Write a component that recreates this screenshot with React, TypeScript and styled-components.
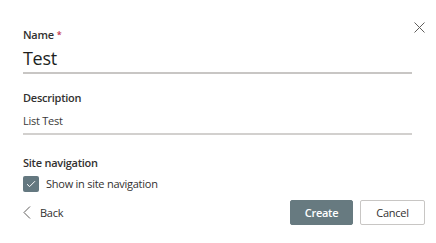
import React from 'react';
import styled, { createGlobalStyle } from 'styled-components';

const Global = createGlobalStyle`
  body {
    margin: 0;
    background: #ffffff;
    font-family: 'Open Sans', 'Noto Sans', sans-serif;
    color: #323130;
    letter-spacing: -0.25px;
  }
`;

const Dialog = styled.div`
  position: relative;
  width: 436px;
  height: 243px;
  box-sizing: border-box;
  padding: 27px 24px 0 23px;
  display: flex;
  flex-direction: column;
`;

const CloseButton = styled.button`
  position: absolute;
  top: 20px;
  right: 10px;
  width: 14px;
  height: 14px;
  padding: 0;
  border: none;
  background: none;
  display: flex;
  align-items: center;
  justify-content: center;
  color: #605e5c;
`;

const Field = styled.div<{ $gap: number }>`
  display: flex;
  flex-direction: column;
  margin-bottom: ${p => p.$gap}px;
`;

const Label = styled.div`
  font-size: 11px;
  font-weight: 600;
  line-height: 16px;
  color: #323130;
`;

const Required = styled.span`
  color: #c4314b;
  font-size: 9px;
  vertical-align: top;
  margin-left: 3px;
`;

const TextInput = styled.div<{ $big?: boolean }>`
  font-size: ${p => (p.$big ? '18px' : '11px')};
  font-weight: ${p => (p.$big ? 500 : 400)};
  letter-spacing: ${p => (p.$big ? '-0.3px' : '-0.25px')};
  line-height: ${p => (p.$big ? '26px' : '20px')};
  padding: ${p => (p.$big ? '2px 0 1px' : '5px 0 2px')};
  border-bottom: 2px solid ${p => (p.$big ? '#c8c6c4' : '#d2d0ce')};
  color: ${p => (p.$big ? '#201f1e' : '#3b3a39')};
  width: 389px;
`;

const CheckRow = styled.label`
  display: flex;
  align-items: center;
  gap: 7px;
  margin-top: 5px;
  font-size: 11px;
  line-height: 16px;
  color: #323130;
`;

const Box = styled.span`
  width: 16px;
  height: 16px;
  border-radius: 2px;
  background: #647880;
  display: flex;
  align-items: center;
  justify-content: center;
`;

const Footer = styled.div`
  display: flex;
  align-items: center;
  justify-content: space-between;
  margin-top: 8px;
  margin-right: -13px;
`;

const BackLink = styled.button`
  display: flex;
  align-items: center;
  gap: 9px;
  padding: 0;
  border: none;
  background: none;
  font-family: inherit;
  letter-spacing: inherit;
  font-size: 11px;
  color: #323130;
`;

const Actions = styled.div`
  display: flex;
  gap: 7px;
`;

const Btn = styled.button<{ $primary?: boolean }>`
  height: 25px;
  box-sizing: border-box;
  padding: 0;
  width: ${p => (p.$primary ? '63px' : '65px')};
  border-radius: 2px;
  border: 1px solid ${p => (p.$primary ? '#677a80' : '#c8c6c4')};
  background: ${p => (p.$primary ? '#677a80' : '#ffffff')};
  color: ${p => (p.$primary ? '#ffffff' : '#323130')};
  font-family: inherit;
  letter-spacing: inherit;
  font-size: 11px;
  font-weight: ${p => (p.$primary ? 600 : 400)};
`;

export default function App() {
  return (
    <>
      <Global />
      <Dialog>
        <CloseButton aria-label='Close'>
          <svg width='11' height='11' viewBox='0 0 11 11'>
            <path d='M0.5 0.5 L10.5 10.5 M10.5 0.5 L0.5 10.5' stroke='currentColor' strokeWidth='1' />
          </svg>
        </CloseButton>
        <Field $gap={16}>
          <Label>
            Name<Required>*</Required>
          </Label>
          <TextInput $big>Test</TextInput>
        </Field>
        <Field $gap={20}>
          <Label>Description</Label>
          <TextInput>List Test</TextInput>
        </Field>
        <Field $gap={0}>
          <Label>Site navigation</Label>
          <CheckRow>
            <Box>
              <svg width='10' height='8' viewBox='0 0 10 8'>
                <path d='M1 4.2 L3.6 6.6 L9 1.2' fill='none' stroke='#fff' strokeWidth='1' />
              </svg>
            </Box>
            Show in site navigation
          </CheckRow>
        </Field>
        <Footer>
          <BackLink>
            <svg width='8' height='13' viewBox='0 0 8 13'>
              <path d='M7 0.5 L1 6.5 L7 12.5' fill='none' stroke='#605e5c' strokeWidth='1' />
            </svg>
            Back
          </BackLink>
          <Actions>
            <Btn $primary>Create</Btn>
            <Btn>Cancel</Btn>
          </Actions>
        </Footer>
      </Dialog>
    </>
  );
}
